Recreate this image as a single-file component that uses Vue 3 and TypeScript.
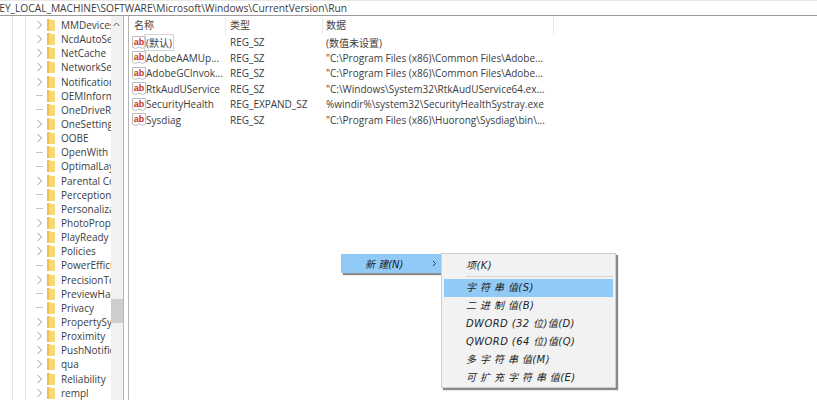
<template>
  <div class="regedit">
    <div class="address"><span>KEY_LOCAL_MACHINE\SOFTWARE\Microsoft\Windows\CurrentVersion\Run</span></div>
    <div class="main">
      <div class="tree">
        <div class="tree-rows">
          <div v-for="key in keys" :key="key.name" class="tree-row">
            <svg v-if="key.more" class="expander" width="7" height="10" viewBox="0 0 7 10">
              <path d="M1.5 1l4 4-4 4" fill="none" stroke="#9a9a9a" stroke-width="1" />
            </svg>
            <span v-else class="dash"></span>
            <svg class="folder" width="8" height="12" viewBox="0 0 8 12">
              <path d="M0 0h3l1 1h4v11H0z" fill="#f8d775" />
              <path d="M0 0h2v12H0z" fill="#efc04f" />
            </svg>
            <span class="key-name">{{ key.name }}</span>
          </div>
        </div>
        <div class="scrollbar">
          <svg class="arrow" width="7" height="5" viewBox="0 0 7 5">
            <path d="M.5 4l3-3 3 3" fill="none" stroke="#555" stroke-width="1" />
          </svg>
          <div class="thumb"></div>
        </div>
      </div>
      <div class="values">
        <div class="head">
          <div class="col-name">名称</div>
          <div class="col-type">类型</div>
          <div class="col-data">数据</div>
        </div>
        <div v-for="(row, i) in rows" :key="row.name" class="row">
          <div class="cell-name">
            <svg class="ab" width="14" height="13" viewBox="0 0 14 13">
              <path d="M.5.5h13v10.500l-3 1.500-3.500-1.500-3.500 1.500-3-1.500z" fill="#fff" stroke="#bdbdbd" />
              <text x="7" y="8.500" text-anchor="middle" class="ab-text">ab</text>
            </svg>
            <span :class="{ focused: i === 0 }">{{ row.name }}</span>
          </div>
          <div class="cell-type">{{ row.type }}</div>
          <div class="cell-data">{{ row.data }}</div>
        </div>
      </div>
    </div>
    <div class="menu-parent">
      <span class="parent-label">新 建(N)</span>
      <svg width="5" height="7" viewBox="0 0 5 7">
        <path d="M1 1l2.500 2.500L1 6" fill="none" stroke="#333" stroke-width="1" />
      </svg>
    </div>
    <div class="submenu">
      <div class="menu-item">项(K)</div>
      <div class="separator"></div>
      <div
        v-for="(item, i) in menuItems"
        :key="item"
        class="menu-item"
        :class="{ active: i === 0 }"
      >{{ item }}</div>
    </div>
  </div>
</template>

<script setup lang="ts">
interface RegKey {
  name: string;
  more: boolean;
}

const keys: RegKey[] = [
  { name: 'MMDevices', more: true },
  { name: 'NcdAutoSetup', more: true },
  { name: 'NetCache', more: true },
  { name: 'NetworkServiceTriggers', more: true },
  { name: 'Notifications', more: true },
  { name: 'OEMInformation', more: false },
  { name: 'OneDriveRamps', more: false },
  { name: 'OneSettings', more: true },
  { name: 'OOBE', more: true },
  { name: 'OpenWith', more: false },
  { name: 'OptimalLayout', more: false },
  { name: 'Parental Controls', more: true },
  { name: 'Perception', more: false },
  { name: 'Personalization', more: false },
  { name: 'PhotoPropertyHandler', more: true },
  { name: 'PlayReady', more: true },
  { name: 'Policies', more: true },
  { name: 'PowerEfficiency', more: false },
  { name: 'PrecisionTouchPad', more: true },
  { name: 'PreviewHandlers', more: false },
  { name: 'Privacy', more: false },
  { name: 'PropertySystem', more: true },
  { name: 'Proximity', more: true },
  { name: 'PushNotifications', more: true },
  { name: 'qua', more: true },
  { name: 'Reliability', more: true },
  { name: 'rempl', more: true },
];

const rows = [
  { name: '(默认)', type: 'REG_SZ', data: '(数值未设置)' },
  { name: 'AdobeAAMUp...', type: 'REG_SZ', data: '"C:\\Program Files (x86)\\Common Files\\Adobe...' },
  { name: 'AdobeGCInvok...', type: 'REG_SZ', data: '"C:\\Program Files (x86)\\Common Files\\Adobe...' },
  { name: 'RtkAudUService', type: 'REG_SZ', data: '"C:\\Windows\\System32\\RtkAudUService64.ex...' },
  { name: 'SecurityHealth', type: 'REG_EXPAND_SZ', data: '%windir%\\system32\\SecurityHealthSystray.exe' },
  { name: 'Sysdiag', type: 'REG_SZ', data: '"C:\\Program Files (x86)\\Huorong\\Sysdiag\\bin\\...' },
];

const menuItems = [
  '字 符 串 值(S)',
  '二 进 制 值(B)',
  'DWORD (32 位)值(D)',
  'QWORD (64 位)值(Q)',
  '多 字 符 串 值(M)',
  '可 扩 充 字 符 串 值(E)',
];
</script>

<style>
html,
body {
  margin: 0;
  background: #fff;
}
</style>

<style scoped>
.regedit {
  position: relative;
  width: 817px;
  height: 400px;
  overflow: hidden;
  background: #fff;
  color: #3c3c3c;
  font-family: "Open Sans", "Noto Sans CJK SC", sans-serif;
  font-size: 10px;
}

.address {
  height: 14px;
  border-top: 1px solid #e8e8e8;
  border-bottom: 1px solid #9b9b9b;
  line-height: 14px;
  font-size: 10.2px;
  white-space: nowrap;
  overflow: hidden;
}

.address span {
  display: block;
  margin-left: -7px;
}

.main {
  display: flex;
  height: 384px;
}

.tree {
  display: flex;
  flex: none;
  width: 123px;
  border-right: 1px solid #b5b5b5;
  background-image:
    linear-gradient(#e2e2e2, #e2e2e2),
    linear-gradient(#e2e2e2, #e2e2e2);
  background-repeat: no-repeat;
  background-size: 1px 100%;
  background-position: 12px 0, 25px 0;
}

.tree-rows {
  flex: none;
  width: 111px;
  padding-top: 2px;
  overflow: hidden;
}

.tree-row {
  display: flex;
  align-items: center;
  height: 14.15px;
  padding-left: 36px;
  white-space: nowrap;
}

.expander {
  flex: none;
  width: 7px;
  margin-right: 4px;
}

.dash {
  flex: none;
  width: 7px;
  height: 1px;
  margin-right: 4px;
  background: #c4c4c4;
}

.folder {
  flex: none;
  margin-right: 6px;
}

.key-name {
  line-height: 14px;
}

.scrollbar {
  position: relative;
  flex: none;
  width: 12px;
  background: #f1f1f1;
}

.arrow {
  position: absolute;
  top: 6px;
  left: 2px;
}

.thumb {
  position: absolute;
  top: 283px;
  left: 0;
  width: 12px;
  height: 24px;
  background: #cdcdcd;
}

.values {
  flex: 1;
  margin-left: 4px;
  padding-left: 1px;
  border-left: 1px solid #b5b5b5;
}

.head {
  display: flex;
  height: 18.5px;
  align-items: center;
  color: #444;
}

.col-name,
.col-type,
.col-data {
  box-sizing: border-box;
  height: 17px;
  line-height: 17px;
  border-right: 1px solid #e8e8e8;
}

.col-name {
  width: 96px;
  padding-left: 4px;
}

.col-type {
  width: 97px;
  padding-left: 4px;
}

.col-data {
  width: 231px;
  padding-left: 3px;
}

.row {
  display: flex;
  align-items: center;
  height: 15.5px;
  white-space: nowrap;
}

.cell-name {
  display: flex;
  align-items: center;
  width: 96px;
  flex: none;
  padding-left: 2px;
  box-sizing: border-box;
}

.ab {
  flex: none;
}

.ab-text {
  fill: #c8321e;
  font-family: "Liberation Sans", sans-serif;
  font-size: 9px;
  font-weight: 700;
}

.focused {
  margin-left: -1px;
  padding: 0 1px;
  outline: 1px solid #d4d4d4;
}

.cell-type {
  box-sizing: border-box;
  width: 96px;
  flex: none;
  padding-left: 4px;
}

.cell-data {
  padding-left: 4px;
}

.menu-parent {
  position: absolute;
  top: 254px;
  left: 341px;
  display: flex;
  align-items: center;
  justify-content: space-between;
  box-sizing: border-box;
  width: 101px;
  height: 19px;
  padding: 0 5px 0 24px;
  background: #91c9f7;
  box-shadow: 2px 2px 1px #8a8a8a;
  font-family: "DejaVu Sans", "Noto Sans CJK SC", sans-serif;
  font-size: 10px;
  font-style: italic;
  color: #222;
}

.submenu {
  position: absolute;
  top: 253px;
  left: 441px;
  box-sizing: border-box;
  width: 175px;
  height: 135px;
  padding: 3px 2px 2px;
  border: 1px solid #cfcfcf;
  background: #f2f2f2;
  box-shadow: 2px 2px 1px #8a8a8a;
  font-family: "DejaVu Sans", "Noto Sans CJK SC", sans-serif;
  font-size: 10px;
  font-style: italic;
  letter-spacing: 0.4px;
  color: #222;
}

.menu-item {
  height: 18px;
  padding-left: 22px;
  line-height: 18px;
  white-space: nowrap;
}

.separator {
  height: 1px;
  margin: 1px 0 2px 22px;
  background: #d7d7d7;
}

.active {
  background: #91c9f7;
}
</style>
